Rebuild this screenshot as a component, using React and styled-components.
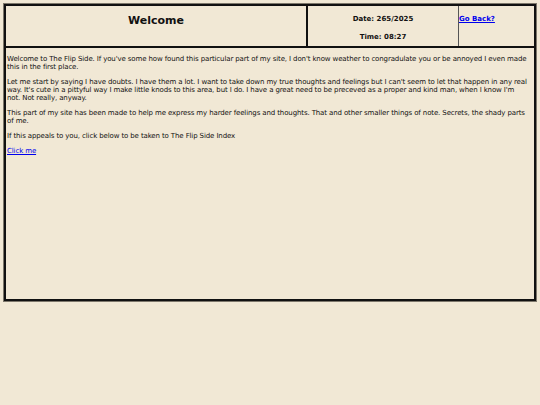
import styled, { createGlobalStyle } from 'styled-components';

const GlobalStyle = createGlobalStyle`
  html, body {
    margin: 0;
    padding: 0;
    background: #f1e8d5;
  }
  body {
    font-family: "DejaVu Sans", Verdana, sans-serif;
    color: #111;
  }
`;

const Frame = styled.div`
  margin: 4px;
  border: 2px solid #111;
  box-shadow: 0 0 0 1px #7d776b;
  display: flex;
  flex-direction: column;
  height: 293px;
`;

const Header = styled.div`
  display: flex;
  height: 40px;
  border-bottom: 2px solid #111;
`;

const TitleCell = styled.div`
  width: 302px;
  border-right: 2px solid #111;
  display: flex;
  justify-content: center;
  padding-top: 8px;
  box-sizing: border-box;

  h1 {
    margin: 0;
    font-size: 11px;
    line-height: 13px;
    font-weight: bold;
  }
`;

const ClockCell = styled.div`
  width: 151px;
  border-right: 1px solid #555;
  display: flex;
  flex-direction: column;
  align-items: center;
  gap: 10px;
  padding-top: 9px;
  box-sizing: border-box;
  font-size: 7px;
  line-height: 8px;
  font-weight: bold;
`;

const BackCell = styled.div`
  flex: 1;
  padding-top: 9px;
  font-size: 7px;
  line-height: 8px;
  font-weight: bold;

  a {
    color: #0000ee;
  }
`;

const Content = styled.div`
  flex: 1;
  padding: 0 5px 0 1px;

  p {
    margin: 7px 0;
    font-size: 7px;
    line-height: 8px;
    letter-spacing: -0.12px;
  }

  a {
    color: #0000ee;
  }
`;

export default function App() {
  return (
    <>
      <GlobalStyle />
      <Frame>
        <Header>
          <TitleCell>
            <h1>Welcome</h1>
          </TitleCell>
          <ClockCell>
            <div>Date: 265/2025</div>
            <div>Time: 08:27</div>
          </ClockCell>
          <BackCell>
            <a href="#">Go Back?</a>
          </BackCell>
        </Header>
        <Content>
          <p>
            Welcome to The Flip Side. If you've some how found this particular part of my site, I don't know weather to congradulate you or be annoyed I even made this in the first place.
          </p>
          <p>
            Let me start by saying I have doubts. I have them a lot. I want to take down my true thoughts and feelings but I can't seem to let that happen in any real way. It's cute in a pittyful way I make little knods to this area, but I do. I have a great need to be preceved as a proper and kind man, when I know I'm not. Not really, anyway.
          </p>
          <p>
            This part of my site has been made to help me express my harder feelings and thoughts. That and other smaller things of note. Secrets, the shady parts of{'\u00a0'}me.
          </p>
          <p>If this appeals to you, click below to be taken to The Flip Side Index</p>
          <p>
            <a href="#">Click me</a>
          </p>
        </Content>
      </Frame>
    </>
  );
}
